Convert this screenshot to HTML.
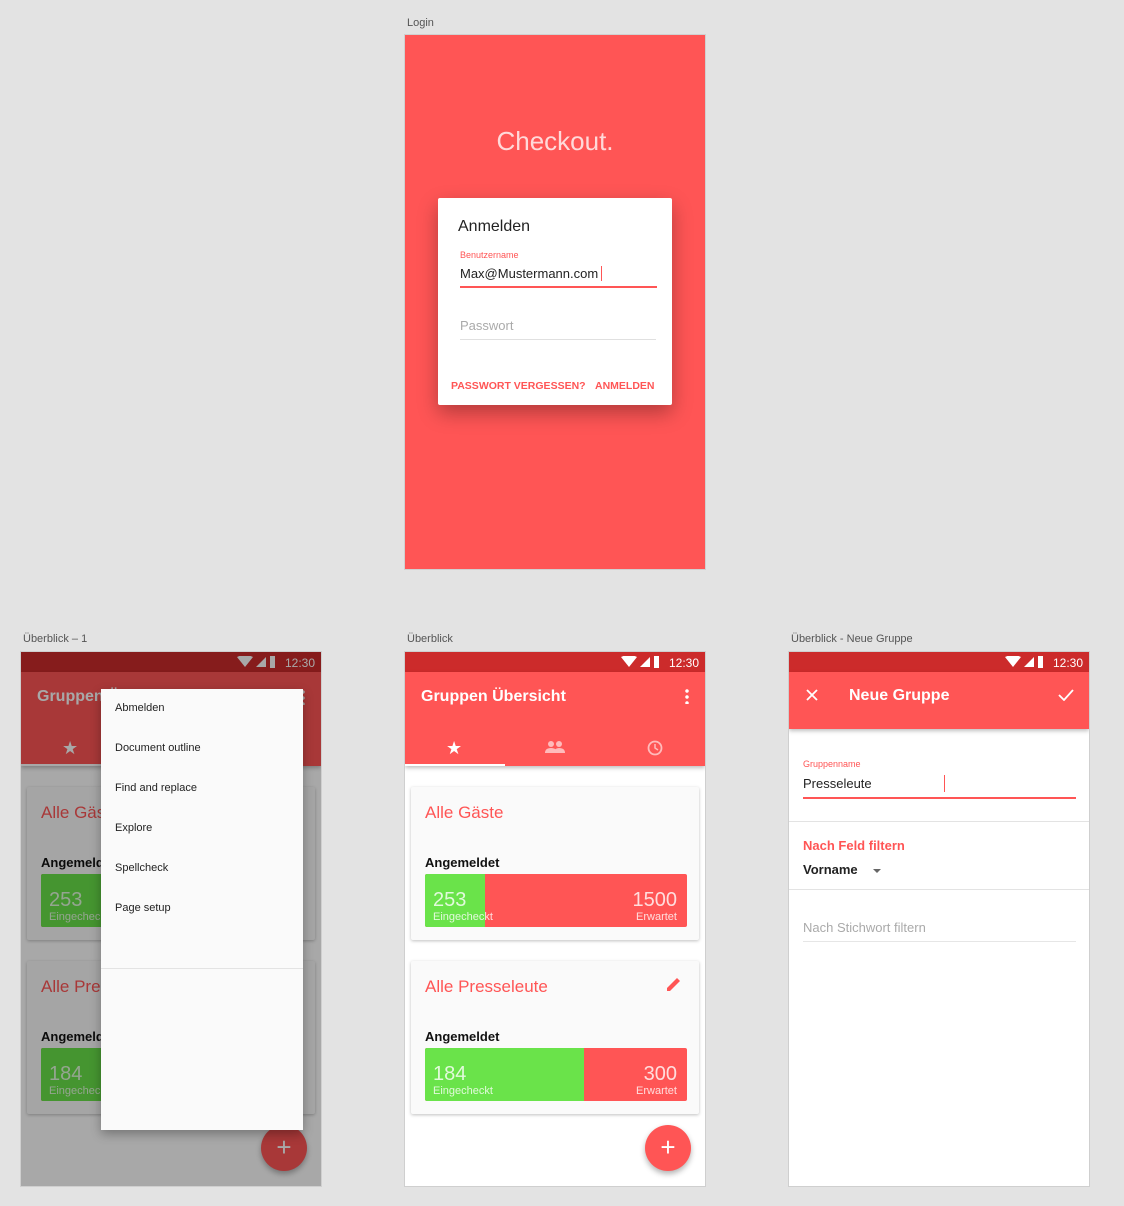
<!DOCTYPE html>
<html><head><meta charset="utf-8"><style>
*{box-sizing:border-box;margin:0;padding:0}
body{width:1124px;height:1206px;background:#e3e3e3;font-family:"Liberation Sans",sans-serif;position:relative;overflow:hidden}
.abs{position:absolute}
.lbl{position:absolute;font-size:11px;color:#555}
.frame{position:absolute;width:302px;height:536px;background:#fff;border:1px solid #cfcfcf;overflow:hidden}
.sb{position:absolute;left:0;top:0;width:100%;height:20px;background:#cc2b2b;color:#fff;font-size:12px}
.sb .t{position:absolute;right:6px;top:4px}
.sb svg{position:absolute;right:46px;top:4px}
.tb{position:absolute;left:0;top:20px;width:100%;background:#ff5555;box-shadow:0 2px 4px rgba(0,0,0,.25)}
.card{position:absolute;left:6px;width:288px;height:153px;background:#fafafa;box-shadow:0 1px 3px rgba(0,0,0,.25);border-radius:2px}
.ct{position:absolute;left:14px;top:16px;font-size:17px;color:#ff5555}
.ang{position:absolute;left:14px;top:68px;font-size:13px;font-weight:bold;color:#111}
.bar{position:absolute;left:14px;top:87px;width:262px;height:53px;background:#ff5555;border-radius:2px;overflow:hidden;color:rgba(255,255,255,.8)}
.g{position:absolute;left:0;top:0;height:53px;background:#6ae34a}
.n1{position:absolute;left:8px;top:15px;font-size:20px}
.s1{position:absolute;left:8px;top:37px;font-size:11px}
.n2{position:absolute;right:10px;top:15px;font-size:20px}
.s2{position:absolute;right:10px;top:37px;font-size:11px}
.fab{position:absolute;left:240px;top:473px;width:46px;height:46px;border-radius:50%;background:#ff5555;box-shadow:0 3px 6px rgba(0,0,0,.3);color:#fff;font-size:26px;text-align:center;line-height:44px}
.mi{position:absolute;left:14px;font-size:11px;color:#222}
</style></head><body>

<div class="lbl" style="left:407px;top:17px">Login</div>
<div class="abs" style="left:404px;top:34px;width:302px;height:536px;background:#ff5555;border:1px solid #d0d0d0">
  <div class="abs" style="left:0;width:300px;top:91px;text-align:center;font-size:26px;color:rgba(255,255,255,.78)">Checkout.</div>
  <div class="abs" style="left:33px;top:163px;width:234px;height:207px;background:#fff;border-radius:2px;box-shadow:0 8px 20px rgba(0,0,0,.3)">
    <div class="abs" style="left:20px;top:20px;font-size:16px;color:#222">Anmelden</div>
    <div class="abs" style="left:22px;top:52px;font-size:9px;color:#ff5555">Benutzername</div>
    <div class="abs" style="left:22px;top:68px;font-size:13px;color:#222">Max@Mustermann.com<span style="display:inline-block;width:1px;height:15px;background:#ff5555;margin-left:3px;vertical-align:-3px"></span></div>
    <div class="abs" style="left:22px;top:88px;width:197px;height:2px;background:#ff5555"></div>
    <div class="abs" style="left:22px;top:120px;font-size:13px;color:#aaa">Passwort</div>
    <div class="abs" style="left:22px;top:141px;width:196px;height:1px;background:#e0e0e0"></div>
    <div class="abs" style="left:13px;top:182px;font-size:10.5px;color:#ff5555;font-weight:bold">PASSWORT VERGESSEN?</div>
    <div class="abs" style="left:157px;top:182px;font-size:10.5px;color:#ff5555;font-weight:bold">ANMELDEN</div>
  </div>
</div>

<div class="lbl" style="left:23px;top:633px">Überblick – 1</div>
<div class="lbl" style="left:407px;top:633px">Überblick</div>
<div class="lbl" style="left:791px;top:633px">Überblick - Neue Gruppe</div>

<div class="frame" style="left:20px;top:651px">
  <div class="sb"><svg width="38" height="12"><path d="M0 1 Q8 -3 16 1 L8 11Z" fill="#fff"/><path d="M19 11 L29 1 L29 11Z" fill="#fff"/><rect x="33" y="0" width="6" height="12" fill="#fff"/></svg><span class="t">12:30</span></div>
  <div class="tb" style="height:94px">
    <div class="abs" style="left:16px;top:16px;font-size:16px;font-weight:bold;color:#fff">Gruppen Übersicht</div>
    <div class="abs" style="left:280px;top:17px;width:4px;height:16px;background:radial-gradient(circle,#fff 1.5px,transparent 2px) 0 0/4px 6px"></div>
    <div class="abs" style="left:41px;top:66px;font-size:18px;color:#fff">★</div>
    <div class="abs" style="left:0;top:92px;width:100px;height:2px;background:#fff"></div>
  </div>
  <div class="card" style="top:135px"><div class="ct">Alle Gäste</div><div class="ang">Angemeldet</div>
    <div class="bar"><div class="g" style="width:60px"></div><div class="n1">253</div><div class="s1">Eingecheckt</div><div class="n2">1500</div><div class="s2">Erwartet</div></div></div>
  <div class="card" style="top:309px"><div class="ct">Alle Presseleute</div><div class="ang">Angemeldet</div>
    <div class="bar"><div class="g" style="width:159px"></div><div class="n1">184</div><div class="s1">Eingecheckt</div><div class="n2">300</div><div class="s2">Erwartet</div></div></div>
  <div class="fab">+</div>
  <div class="abs" style="left:0;top:0;width:100%;height:100%;background:rgba(0,0,0,.34)"></div>
  <div class="abs" style="left:80px;top:37px;width:202px;height:441px;background:#fafafa;box-shadow:0 4px 10px rgba(0,0,0,.3)">
    <div class="mi" style="top:13px">Abmelden</div>
    <div class="mi" style="top:53px">Document outline</div>
    <div class="mi" style="top:93px">Find and replace</div>
    <div class="mi" style="top:133px">Explore</div>
    <div class="mi" style="top:173px">Spellcheck</div>
    <div class="mi" style="top:213px">Page setup</div>
    <div class="abs" style="left:0;top:279px;width:202px;height:1px;background:#e3e3e3"></div>
  </div>
</div>

<div class="frame" style="left:404px;top:651px">
  <div class="sb"><svg width="38" height="12"><path d="M0 1 Q8 -3 16 1 L8 11Z" fill="#fff"/><path d="M19 11 L29 1 L29 11Z" fill="#fff"/><rect x="33" y="0" width="6" height="12" fill="#fff"/></svg><span class="t">12:30</span></div>
  <div class="tb" style="height:94px">
    <div class="abs" style="left:16px;top:16px;font-size:16px;font-weight:bold;color:#fff">Gruppen Übersicht</div>
    <div class="abs" style="left:280px;top:16px;width:4px;height:16px;background:radial-gradient(circle,#fff 1.5px,transparent 2px) 0 0/4px 6px"></div>
    <div class="abs" style="left:41px;top:66px;font-size:18px;color:#fff">★</div>
    <svg class="abs" style="left:140px;top:68px" width="20" height="14"><circle cx="6" cy="4" r="3" fill="rgba(255,255,255,.6)"/><circle cx="14" cy="4" r="3" fill="rgba(255,255,255,.6)"/><path d="M0 13 Q0 8 6 8 Q12 8 12 13Z M9 13 Q9 8 14 8 Q20 8 20 13Z" fill="rgba(255,255,255,.6)"/></svg>
    <svg class="abs" style="left:242px;top:68px" width="16" height="16"><circle cx="8" cy="8" r="6.5" fill="none" stroke="rgba(255,255,255,.6)" stroke-width="1.8"/><path d="M8 4 V8 L11 10" fill="none" stroke="rgba(255,255,255,.6)" stroke-width="1.5"/></svg>
    <div class="abs" style="left:0;top:92px;width:100px;height:2px;background:#fff"></div>
  </div>
  <div class="card" style="top:135px"><div class="ct">Alle Gäste</div><div class="ang">Angemeldet</div>
    <div class="bar"><div class="g" style="width:60px"></div><div class="n1">253</div><div class="s1">Eingecheckt</div><div class="n2">1500</div><div class="s2">Erwartet</div></div></div>
  <div class="card" style="top:309px"><div class="ct">Alle Presseleute</div><div class="ang">Angemeldet</div>
    <svg class="abs" style="left:255px;top:15px" width="16" height="16"><path d="M1 15 L1 12 L11 2 L14 5 L4 15Z" fill="#ff5555"/></svg>
    <div class="bar"><div class="g" style="width:159px"></div><div class="n1">184</div><div class="s1">Eingecheckt</div><div class="n2">300</div><div class="s2">Erwartet</div></div></div>
  <div class="fab">+</div>
</div>

<div class="frame" style="left:788px;top:651px">
  <div class="sb"><svg width="38" height="12"><path d="M0 1 Q8 -3 16 1 L8 11Z" fill="#fff"/><path d="M19 11 L29 1 L29 11Z" fill="#fff"/><rect x="33" y="0" width="6" height="12" fill="#fff"/></svg><span class="t">12:30</span></div>
  <div class="tb" style="height:57px">
    <svg class="abs" style="left:17px;top:17px" width="12" height="12"><path d="M1 1L11 11M11 1L1 11" stroke="#fff" stroke-width="1.8"/></svg>
    <div class="abs" style="left:60px;top:15px;font-size:16px;font-weight:bold;color:#fff">Neue Gruppe</div>
    <svg class="abs" style="left:269px;top:17px" width="16" height="12"><path d="M1 6L6 11L15 1" fill="none" stroke="#fff" stroke-width="1.8"/></svg>
  </div>
  <div class="abs" style="left:14px;top:107px;font-size:9px;color:#ff5555">Gruppenname</div>
  <div class="abs" style="left:14px;top:124px;font-size:13px;color:#222">Presseleute</div>
  <div class="abs" style="left:155px;top:123px;width:1px;height:17px;background:#ff5555"></div>
  <div class="abs" style="left:14px;top:145px;width:273px;height:2px;background:#ff5555"></div>
  <div class="abs" style="left:0;top:169px;width:100%;height:1px;background:#e3e3e3"></div>
  <div class="abs" style="left:14px;top:186px;font-size:13px;font-weight:bold;color:#ff5555">Nach Feld filtern</div>
  <div class="abs" style="left:14px;top:210px;font-size:13px;font-weight:bold;color:#222">Vorname</div>
  <div class="abs" style="left:84px;top:217px;width:0;height:0;border-left:4px solid transparent;border-right:4px solid transparent;border-top:4px solid #666"></div>
  <div class="abs" style="left:0;top:237px;width:100%;height:1px;background:#e3e3e3"></div>
  <div class="abs" style="left:14px;top:268px;font-size:13px;color:#aaa">Nach Stichwort filtern</div>
  <div class="abs" style="left:14px;top:289px;width:273px;height:1px;background:#e6e6e6"></div>
</div>
</body></html>
